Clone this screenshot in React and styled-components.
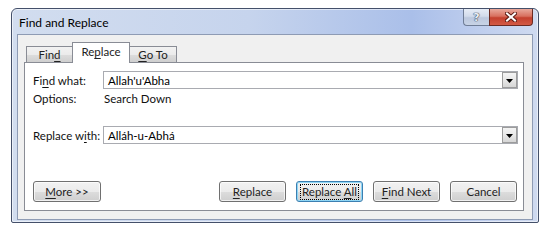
import React from 'react';
import styled, { createGlobalStyle, css } from 'styled-components';

const GlobalStyle = createGlobalStyle`
  html, body {
    margin: 0;
    padding: 0;
    background: #fff;
  }
  body {
    font-family: Lato, "Liberation Sans", sans-serif;
    font-size: 11.5px;
    color: #000;
    white-space: nowrap;
  }
  u {
    text-decoration: underline;
    text-underline-offset: 2px;
  }
`;

const Page = styled.div`
  width: 550px;
  height: 243px;
  padding: 8px 0 0 11px;
  box-sizing: border-box;
`;

const Window = styled.div`
  width: 528px;
  height: 215px;
  box-sizing: border-box;
  border: 1px solid #44506a;
  border-radius: 6px 6px 2px 2px;
  background: linear-gradient(90deg, #d2ddef 0%, #c6d4ed 45%, #aabfe9 76%, #c0cfee 90%, #cfdaf0 100%);
  box-shadow: inset 0 0 0 1px rgba(255, 255, 255, 0.55);
  display: flex;
  flex-direction: column;
`;

const TitleBar = styled.div`
  height: 25px;
  display: flex;
  align-items: flex-start;
  padding: 0 5px 0 7px;
`;

const Title = styled.div`
  font-size: 12px;
  line-height: 25px;
  padding-top: 1px;
  color: #000;
  flex: 1;
`;

const CaptionButtons = styled.div`
  display: flex;
  height: 17px;
`;

const CaptionButton = styled.div`
  height: 17px;
  box-sizing: border-box;
  display: flex;
  align-items: center;
  justify-content: center;
  ${({ $close }) =>
    $close
      ? css`
          width: 44px;
          border: 1px solid #6b2a22;
          border-top: none;
          border-radius: 0 0 4px 0;
          background: linear-gradient(180deg, #e9a99c 0%, #d8705f 45%, #c4402e 55%, #d35a45 100%);
        `
      : css`
          width: 26px;
          border: 1px solid #6f7d96;
          border-top: none;
          border-right: none;
          border-radius: 0 0 0 4px;
          background: linear-gradient(180deg, #e6ecf6 0%, #d2dbeb 45%, #bcc8de 55%, #c8d3e6 100%);
        `}
`;

const HelpGlyph = styled.span`
  font-family: "DejaVu Sans", sans-serif;
  font-weight: bold;
  font-size: 11px;
  line-height: 1;
  color: #e9eef7;
  text-shadow: 0 0 1px #3f4a5e, 0 0 1px #3f4a5e, 0 0 1px #3f4a5e;
`;

const Client = styled.div`
  flex: 1;
  margin: 0 5px 2px 5px;
  border: 1px solid #8e9bb4;
  background: #f0f0f0;
  padding: 7px 8px 8px 6px;
  display: flex;
  flex-direction: column;
`;

const TabStrip = styled.div`
  display: flex;
  align-items: flex-end;
  height: 21px;
  margin: 0 0 -1px 2px;
  position: relative;
  z-index: 1;
`;

const Tab = styled.div`
  box-sizing: border-box;
  display: flex;
  justify-content: center;
  border: 1px solid #898c95;
  border-bottom: none;
  color: #222;
  ${({ $active }) =>
    $active
      ? css`
          height: 21px;
          background: #fff;
          padding-top: 2px;
          margin: 0 -1px;
          position: relative;
          z-index: 1;
        `
      : css`
          height: 16px;
          margin-bottom: 1px;
          background: linear-gradient(180deg, #f2f2f2 0%, #ebebeb 50%, #dddddd 51%, #cfcfcf 100%);
          line-height: 16px;
        `}
  width: ${({ $w }) => $w}px;
`;

const Panel = styled.div`
  flex: 1;
  background: #fff;
  border: 1px solid #898c95;
  padding: 8px 5px 8px 8px;
  display: flex;
  flex-direction: column;
`;

const Row = styled.div`
  display: grid;
  grid-template-columns: 70px 1fr;
  align-items: center;
  height: 18px;
  margin-top: ${({ $gap }) => $gap || 0}px;
`;

const Label = styled.span`
  color: #111;
`;

const Value = styled.span`
  padding-left: 1px;
  color: #111;
`;

const Combo = styled.div`
  height: 18px;
  box-sizing: border-box;
  border: 1px solid #a9abb1;
  display: flex;
  align-items: center;
  background: #fff;
`;

const ComboText = styled.span`
  flex: 1;
  padding-left: 4px;
`;

const DropButton = styled.div`
  width: 15px;
  height: 16px;
  box-sizing: border-box;
  border: 1px solid #9c9c9c;
  background: linear-gradient(180deg, #f4f4f4 0%, #e8e8e8 50%, #d6d6d6 100%);
  display: flex;
  align-items: center;
  justify-content: center;
`;

const ButtonRow = styled.div`
  margin-top: auto;
  display: flex;
  gap: 10px;
  padding-right: 1px;
`;

const Button = styled.div`
  width: ${({ $w }) => $w || 67}px;
  height: 21px;
  box-sizing: border-box;
  border: 1px solid #707070;
  border-radius: 3px;
  background: linear-gradient(180deg, #f2f2f2 0%, #ebebeb 50%, #dddddd 51%, #cfcfcf 100%);
  box-shadow: inset 0 0 0 1px rgba(255, 255, 255, 0.7);
  display: flex;
  align-items: center;
  justify-content: center;
  color: #222;
  ${({ $default }) =>
    $default &&
    css`
      border-color: #3c7fb1;
      box-shadow: inset 0 0 0 1px #8fd6f5;
    `}
`;

const Spacer = styled.div`
  flex: 1;
`;

const FocusRect = styled.span`
  outline: 1px dotted #000;
  outline-offset: 0;
  padding: 0 1px;
  line-height: 14px;
`;

const CloseIcon = () => (
  <svg width="12" height="10" viewBox="0 0 12 10">
    <path d="M2 1.5 L10 8.5 M10 1.5 L2 8.5" stroke="#5a1a12" strokeWidth="4" strokeLinecap="square" />
    <path d="M2 1.5 L10 8.5 M10 1.5 L2 8.5" stroke="#fff" strokeWidth="2" strokeLinecap="square" />
  </svg>
);

const ArrowIcon = () => (
  <svg width="7" height="5" viewBox="0 0 7 5">
    <path d="M0 1 H7 L3.5 5 Z" fill="#000" />
  </svg>
);

const App = () => (
  <Page>
    <GlobalStyle />
    <Window>
      <TitleBar>
        <Title>Find and Replace</Title>
        <CaptionButtons>
          <CaptionButton>
            <HelpGlyph>?</HelpGlyph>
          </CaptionButton>
          <CaptionButton $close>
            <CloseIcon />
          </CaptionButton>
        </CaptionButtons>
      </TitleBar>
      <Client>
        <TabStrip>
          <Tab $w={47}>Fin<u>d</u></Tab>
          <Tab $w={58} $active>Re<u>p</u>lace</Tab>
          <Tab $w={48}><u>G</u>o To</Tab>
        </TabStrip>
        <Panel>
          <Row>
            <Label>Fi<u>n</u>d what:</Label>
            <Combo>
              <ComboText>Allah'u'Abha</ComboText>
              <DropButton><ArrowIcon /></DropButton>
            </Combo>
          </Row>
          <Row>
            <Label>Options:</Label>
            <Value>Search Down</Value>
          </Row>
          <Row $gap={19}>
            <Label>Replace w<u>i</u>th:</Label>
            <Combo>
              <ComboText>Alláh-u-Abhá</ComboText>
              <DropButton><ArrowIcon /></DropButton>
            </Combo>
          </Row>
          <ButtonRow>
            <Button $w={68}><span><u>M</u>ore &gt;&gt;</span></Button>
            <Spacer />
            <Button><span><u>R</u>eplace</span></Button>
            <Button $default><FocusRect>Replace <u>A</u>ll</FocusRect></Button>
            <Button><span><u>F</u>ind Next</span></Button>
            <Button>Cancel</Button>
          </ButtonRow>
        </Panel>
      </Client>
    </Window>
  </Page>
);

export default App;
